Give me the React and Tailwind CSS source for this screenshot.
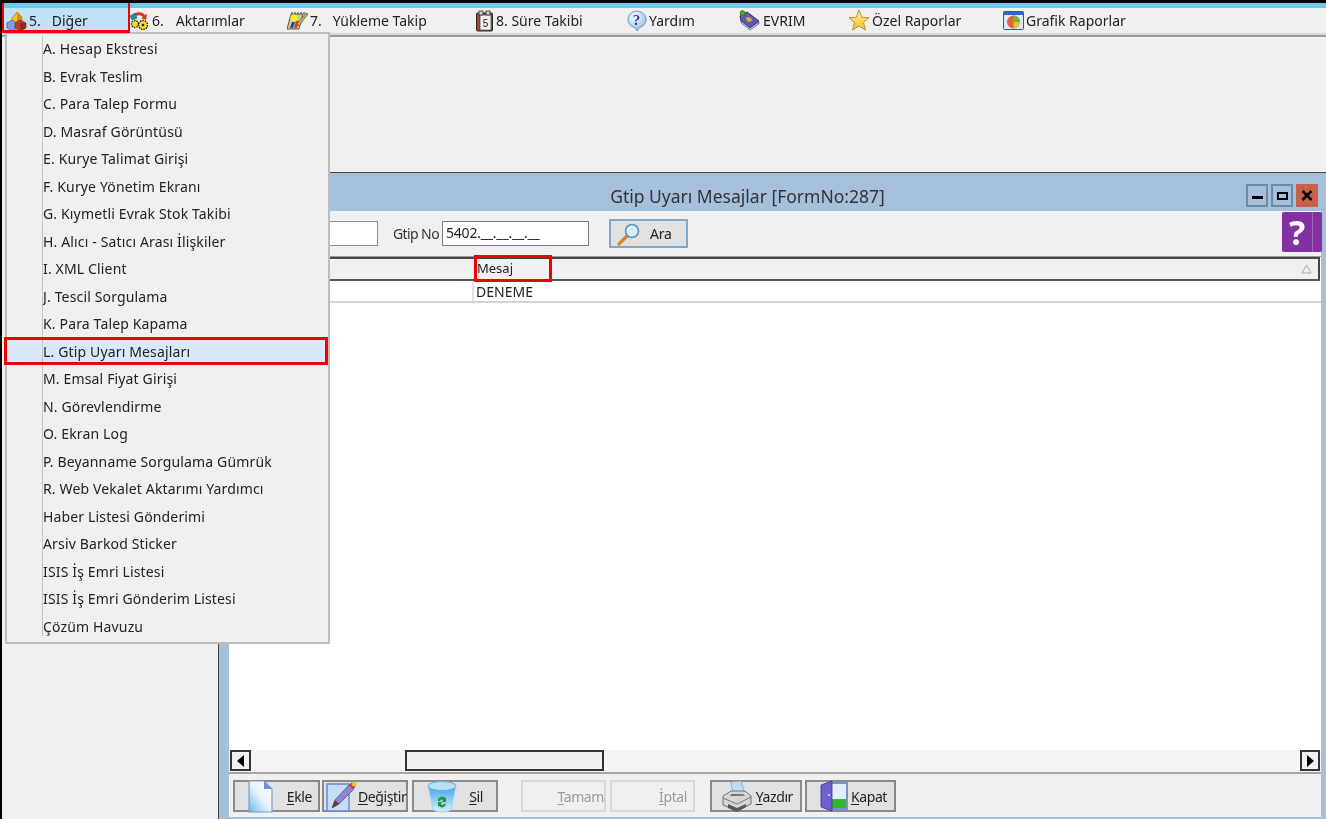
import React from "react";

const F = "font-['Noto_Sans','Open_Sans',sans-serif]";

const Cubes = () => (
  <svg width="21" height="21" viewBox="0 0 21 21">
    <path d="M6 8l5-6 5 5v5l-5 3-5-3z" fill="#f5c21a" stroke="#8a6a08" strokeWidth=".6" />
    <path d="M11 2l5 5v5l-5 3z" fill="#e08d14" />
    <path d="M1 13l5-3 5 3v5l-5 3-5-3z" fill="#8d95e6" stroke="#3c4390" strokeWidth=".6" />
    <path d="M9 13l5-3 6 3v5l-6 3-5-3z" fill="#c83a2e" stroke="#6d1a10" strokeWidth=".6" />
    <path d="M14 13v8l6-3v-5z" fill="#8f2a20" />
  </svg>
);
const Gears = () => (
  <svg width="21" height="21" viewBox="0 0 21 21">
    <path d="M5 4c4-3 9-2 11 1l2-1-1 6-5-2 2-1c-2-2-5-2-7-1z" fill="#d8342a" />
    <path d="M1 6l5-3 2 5-5 2z" fill="#1f8f99" stroke="#104a55" strokeWidth=".5" />
    <circle cx="6" cy="14" r="3.500" fill="#f5dc1e" stroke="#222" strokeWidth="1.300" strokeDasharray="1.500 1" />
    <circle cx="14" cy="15" r="4.500" fill="#f5dc1e" stroke="#222" strokeWidth="1.500" strokeDasharray="1.500 1" />
    <circle cx="14" cy="15" r="1.300" fill="#222" />
  </svg>
);
const ChartPen = () => (
  <svg width="21" height="20" viewBox="0 0 21 20">
    <path d="M4 3h12l-4 15H0z" fill="#cfc79a" stroke="#3d3a20" strokeWidth=".8" />
    <circle cx="7" cy="7" r="3.500" fill="#f8ee1e" />
    <path d="M3 17l2-6h3l-2 6z" fill="#2a3fc0" />
    <path d="M7 17l2-7h3l-2 7z" fill="#d63a2a" />
    <path d="M10 13l9-11 2 1-9 12z" fill="#c9b060" stroke="#444020" strokeWidth=".6" />
    <path d="M4 2h14" stroke="#333" strokeWidth="1.100" strokeDasharray="2 1" />
  </svg>
);
const Clip = () => (
  <svg width="19" height="22" viewBox="0 0 19 22">
    <rect x="1.500" y="3" width="16" height="18" rx="1" fill="#a4463a" stroke="#33261c" />
    <rect x="5" y="5" width="11" height="15" fill="#f1f1f1" stroke="#444" strokeWidth=".7" />
    <rect x="4" y="1" width="4" height="4" fill="#ccc" stroke="#333" strokeWidth=".8" />
    <rect x="11" y="1" width="4" height="4" fill="#ccc" stroke="#333" strokeWidth=".8" />
    <text x="10.500" y="16.500" textAnchor="middle" fontSize="10" fontFamily="Liberation Sans" fill="#222">5</text>
  </svg>
);
const Help = () => (
  <svg width="21" height="22" viewBox="0 0 21 22">
    <defs>
      <radialGradient id="hg" cx=".4" cy=".3" r=".8">
        <stop offset="0" stopColor="#ffffff" />
        <stop offset="1" stopColor="#7fb4e4" />
      </radialGradient>
    </defs>
    <path d="M10.500 1a9.500 8.500 0 0 1 3 16.600L11 21l-2-3.300A9.500 8.500 0 0 1 10.500 1z" fill="url(#hg)" stroke="#6d9cc9" />
    <text x="10.500" y="15" textAnchor="middle" fontSize="15" fontWeight="700" fontFamily="Liberation Serif" fill="#1f3f9c">?</text>
  </svg>
);
const Book = () => (
  <svg width="23" height="21" viewBox="0 0 23 21">
    <path d="M2 6l7-4 12 9-9 7-9-7z" fill="#5a5fae" stroke="#23265c" strokeWidth=".9" />
    <path d="M3 11l9 7 9-6v2l-9 6-9-7z" fill="#c9c9de" stroke="#23265c" strokeWidth=".5" />
    <path d="M9 7l4 1 1 3-4 1-2-3z" fill="#e8ad2a" />
    <circle cx="4.500" cy="3" r="2.500" fill="#58a828" stroke="#2e5a10" strokeWidth=".6" />
  </svg>
);
const Star = () => (
  <svg width="22" height="23" viewBox="0 0 22 23">
    <defs>
      <linearGradient id="sg" x1="0" y1="0" x2="0" y2="1">
        <stop offset="0" stopColor="#fff2a0" />
        <stop offset="1" stopColor="#f6bf24" />
      </linearGradient>
    </defs>
    <path d="M11 1l2.800 7.300 7.200.4-5.500 4.700 2 7.600-6.500-4-6.500 4 2-7.600L1 8.700l7.200-.4z" fill="url(#sg)" stroke="#b58a14" strokeWidth=".9" />
  </svg>
);
const Pie = () => (
  <svg width="21" height="19" viewBox="0 0 21 19">
    <rect x=".5" y=".5" width="20" height="18" rx="1" fill="#dfe9f5" stroke="#2a5aa5" />
    <rect x=".5" y=".5" width="20" height="3.500" fill="#2a6ac0" />
    <circle cx="10.500" cy="11" r="6.500" fill="#e9622a" />
    <path d="M10.500 11V4.500a6.500 6.500 0 0 1 6.500 6.500z" fill="#6cb83a" />
    <path d="M10.500 11H17a6.500 6.500 0 0 1-6.500 6.500z" fill="#e8c22a" />
  </svg>
);
const Lens = () => (
  <svg width="24" height="24" viewBox="0 0 24 24">
    <path d="M10 14L2 22" stroke="#d9862a" strokeWidth="3.200" strokeLinecap="round" />
    <circle cx="15" cy="9" r="6.500" fill="#d5ecf9" stroke="#5d91bd" strokeWidth="1.600" />
    <path d="M11 8a4 4 0 0 1 4-3" stroke="#fff" strokeWidth="1.400" fill="none" />
  </svg>
);
const Doc = () => (
  <svg width="25" height="33" viewBox="0 0 25 33">
    <defs>
      <linearGradient id="dg" x1="1" y1="0" x2="0" y2="1">
        <stop offset="0" stopColor="#ffffff" />
        <stop offset=".5" stopColor="#e8f3fb" />
        <stop offset="1" stopColor="#6fb8ea" />
      </linearGradient>
    </defs>
    <path d="M1 1h15l8 8v23H1z" fill="url(#dg)" stroke="#7f9ccd" strokeWidth="1.200" />
    <path d="M16 1v8h8z" fill="#6f90d6" />
  </svg>
);
const PenIcon = () => (
  <svg width="32" height="31" viewBox="0 0 32 31">
    <rect x="1" y="3" width="22" height="27" fill="#c4dcf4" stroke="#6b7fd0" strokeWidth="1.400" />
    <path d="M6 27l3-8L23 4l5 4-15 15z" fill="#8f86cf" stroke="#4b4590" strokeWidth=".7" />
    <path d="M6 27l3-8 4 4z" fill="#5a4320" />
    <path d="M23 4l3-3 4 3-2 4z" fill="#d92a20" />
    <circle cx="28" cy="3" r="2.500" fill="#ecc42c" />
  </svg>
);
const Bin = () => (
  <svg width="30" height="33" viewBox="0 0 30 33">
    <defs>
      <linearGradient id="bg1" x1="0" y1="0" x2="0" y2="1">
        <stop offset="0" stopColor="#3fa5ea" />
        <stop offset="1" stopColor="#d8f0fc" />
      </linearGradient>
    </defs>
    <path d="M1 6l5 24q9 4 18 0l5-24z" fill="url(#bg1)" stroke="#a5d3f0" />
    <ellipse cx="15" cy="6" rx="14" ry="4.500" fill="#b8e0f7" stroke="#62aee5" />
    <path d="M11 21a4 4 0 0 1 7-3l1-1v5h-4l1-2a2 2 0 0 0-3 1zM19 24a4 4 0 0 1-7 2l-1 1v-5h4l-1 2a2 2 0 0 0 3 0z" fill="#1f9a3e" />
  </svg>
);
const Printer = () => (
  <svg width="31" height="31" viewBox="0 0 31 31">
    <path d="M10 1l10-1 4 13H12z" fill="#bcdcf7" stroke="#7ba6d4" strokeWidth=".8" />
    <path d="M2 15l8-5h14l6 5v8L16 30 2 24z" fill="#d6d6d6" stroke="#666" strokeWidth=".9" />
    <path d="M2 17l14 6 14-7" stroke="#777" fill="none" />
    <path d="M7 23l9 4 9-4v3l-9 5-9-4z" fill="#55575a" />
    <path d="M10 13h12l2 2H9z" fill="#777" />
  </svg>
);
const Door = () => (
  <svg width="28" height="32" viewBox="0 0 28 32">
    <rect x="11" y="3" width="16" height="26" fill="#dff0fa" stroke="#3d55b0" strokeWidth="1.200" />
    <rect x="12" y="19" width="14" height="9" fill="#33b52e" />
    <path d="M1 5l11-4v30L1 27z" fill="#6d62cf" stroke="#3a2f96" strokeWidth=".8" />
    <circle cx="9" cy="15" r="1" fill="#eee" />
  </svg>
);

const tops = [
  { w: "w-[125px]", icon: <Cubes />, a: "5.", b: "Diğer", gap: "ml-[9px]", sel: true, pl: "pl-[3px]" },
  { w: "w-[157px]", icon: <Gears />, a: "6.", b: "Aktarımlar", gap: "ml-[10px]", pl: "pl-[1px]" },
  { w: "w-[188px]", icon: <ChartPen />, a: "7.", b: "Yükleme Takip", gap: "ml-[9px]", pl: "pl-[2px]" },
  { w: "w-[152px]", icon: <Clip />, a: "8. Süre Takibi", pl: "pl-[2px]" },
  { w: "w-[113px]", icon: <Help />, a: "Yardım", pl: "pl-[1px]" },
  { w: "w-[109px]", icon: <Book />, a: "EVRIM", pl: "pl-0" },
  { w: "w-[154px]", icon: <Star />, a: "Özel Raporlar", pl: "pl-[1px]" },
  { w: "w-[150px]", icon: <Pie />, a: "Grafik Raporlar", pl: "pl-[2px]" },
];

const items = [
  "A. Hesap Ekstresi", "B. Evrak Teslim", "C. Para Talep Formu", "D. Masraf Görüntüsü",
  "E. Kurye Talimat Girişi", "F. Kurye Yönetim Ekranı", "G. Kıymetli Evrak Stok Takibi",
  "H. Alıcı - Satıcı Arası İlişkiler", "I. XML Client", "J. Tescil Sorgulama", "K. Para Talep Kapama",
  "L. Gtip Uyarı Mesajları", "M. Emsal Fiyat Girişi", "N. Görevlendirme", "O. Ekran Log",
  "P. Beyanname Sorgulama Gümrük", "R. Web Vekalet Aktarımı Yardımcı", "Haber Listesi Gönderimi",
  "Arsiv Barkod Sticker", "ISIS İş Emri Listesi", "ISIS İş Emri Gönderim Listesi", "Çözüm Havuzu",
];

const Btn = ({ icon, u, rest, w, ml = "", disabled, pl = "pl-[13px]", pr = "pr-[7px]" }) => (
  <div
    className={`${w} ${ml} ${pl} ${pr} h-[32px] flex items-center justify-between border-2 text-[14px] tracking-[-0.4px] ${
      disabled ? "border-[#d8d8d8] bg-[#f0f0f0] text-[#9a9a9a]" : "border-[#8a8a8a] bg-[#e1e1e1] text-[#222]"
    }`}
  >
    <span className="flex items-center">{icon}</span>
    <span>
      <span className="underline underline-offset-2">{u}</span>
      {rest}
    </span>
  </div>
);

export default function App() {
  return (
    <div className={`${F} relative w-[1326px] h-[819px] overflow-hidden bg-[#f0f0f0] text-[#222] border-l-2 border-black flex flex-col blur-[0.35px]`}>
      <div className="h-[3px] bg-black shrink-0 -ml-[2px]" />
      <div className="h-[5px] bg-[#6accec] shrink-0" />
      <div className="h-[25px] shrink-0 flex items-center text-[14px]">
        <div className="w-[1px] shrink-0" />
        {tops.map((t, i) => (
          <div key={i} className={`${t.w} ${t.pl} h-full shrink-0 flex items-center gap-[2px] whitespace-nowrap ${t.sel ? "bg-[#bfe2f6]" : ""}`}>
            {t.icon}
            <span>{t.a}</span>
            {t.b && <span className={t.gap}>{t.b}</span>}
          </div>
        ))}
      </div>
      <div className="h-[4px] shrink-0 bg-[#9a9a9a] border-t-2 border-[#d8d8d8]" />

      <div className="flex-1 flex pt-[135px] min-h-0">
        <div className="w-[216px] shrink-0" />
        <div className="flex-1 flex flex-col bg-[#a6c0dc] border-t border-l border-[#444] min-h-0">
          <div className="h-[38px] shrink-0 flex items-start">
            <div className="flex-1 text-center pl-[30px] pt-[11px] text-[17.5px] leading-[24px] text-[#333]">Gtip Uyarı Mesajlar [FormNo:287]</div>
            <div className="flex gap-[3px] pt-[11px] pr-[8px]">
              <div className="w-[22px] h-[23px] bg-[#a6c0dc] border-2 border-[#7289a6] flex items-center justify-center">
                <div className="w-[11px] h-[3px] bg-black mt-[3px]" />
              </div>
              <div className="w-[22px] h-[23px] bg-[#a6c0dc] border-2 border-[#7289a6] flex items-center justify-center">
                <div className="w-[11px] h-[8px] border-2 border-black" />
              </div>
              <div className="w-[22px] h-[23px] bg-[#c9604a] flex items-center justify-center">
                <svg width="12" height="11" viewBox="0 0 12 11"><path d="M1.500 1l9 9M10.500 1l-9 9" stroke="#000" strokeWidth="2.600" /></svg>
              </div>
            </div>
          </div>

          <div className="flex-1 ml-[10px] mr-[5px] mb-[2px] bg-[#f0f0f0] flex flex-col min-h-0">
            <div className="h-[45px] shrink-0 flex items-center text-[14px] tracking-[-0.2px]">
              <div className="ml-[49px] w-[100px] h-[25px] bg-white border border-[#8d8d8d]" />
              <span className="ml-[15px] w-[49px] whitespace-nowrap text-[#333] tracking-[-0.6px]">Gtip No</span>
              <div className="ml-[0px] w-[147px] h-[25px] bg-white border border-[#7d7d7d] pl-[3px] leading-[21px] whitespace-nowrap">5402.__.__.__.__</div>
              <div className="ml-[20px] w-[79px] h-[29px] bg-[#e1e1e1] border-2 border-[#7fa8cc] flex items-center pl-[6px]">
                <Lens />
                <span className="ml-[9px]">Ara</span>
              </div>
              <div className="ml-auto -mr-[1px] -mt-[4px] w-[40px] h-[40px] bg-[#8330a3] rounded-[2px] flex items-center">
                <span className="w-[30px] text-center text-white font-bold text-[34px] leading-[40px]">?</span>
                <div className="w-[1px] h-full bg-[#a062ba]" />
              </div>
            </div>

            <div className="flex-1 bg-white border-t border-[#9a9a9a] flex flex-col min-h-0">
              <div className="h-[24px] shrink-0 mr-[1px] flex bg-[#f0f0f0] border-t-2 border-b-2 border-r-2 border-t-[#444] border-b-[#555] border-r-[#444] text-[13px]">
                <div className="w-[245px] shrink-0" />
                <div className="flex-1 flex items-center justify-between pl-[3px] pr-[6px]">
                  <span>Mesaj</span>
                  <svg width="11" height="10" viewBox="0 0 11 10"><path d="M5.500 1L10 9H1z" fill="none" stroke="#aaa" /></svg>
                </div>
              </div>
              <div className="h-[22px] shrink-0 flex border-b-2 border-[#d4d4d4] text-[14px]">
                <div className="w-[245px] shrink-0 border-r-2 border-[#e2e2e2]" />
                <div className="flex-1 pl-[2px] leading-[21px]">DENEME</div>
              </div>
              <div className="flex-1" />
              <div className="h-[22px] shrink-0 bg-[#f5f5f5] flex">
                <div className="w-[21px] h-[21px] ml-[1px] bg-[#f0f0f0] border-2 border-[#333] flex items-center justify-center">
                  <svg width="8" height="12" viewBox="0 0 8 12"><path d="M7 0v12L0 6z" fill="#000" /></svg>
                </div>
                <div className="ml-[154px] w-[199px] h-[21px] bg-[#f0f0f0] border-2 border-[#333]" />
                <div className="ml-auto mr-[1px] w-[20px] h-[21px] bg-[#f0f0f0] border-2 border-[#333] flex items-center justify-center">
                  <svg width="8" height="12" viewBox="0 0 8 12"><path d="M1 0v12l7-6z" fill="#000" /></svg>
                </div>
              </div>
            </div>

            <div className="h-[45px] shrink-0 border-t-2 border-[#a5a5a5] flex items-start pt-[6px] pl-[4px]">
              <Btn w="w-[87px]" pr="pr-[6px]" icon={<Doc />} u="E" rest="kle" />
              <Btn w="w-[86px]" ml="ml-[2px]" pl="pl-[2px]" pr="pr-[1px]" icon={<PenIcon />} u="D" rest="eğiştir" />
              <Btn w="w-[86px]" ml="ml-[4px]" pl="pl-[13px]" pr="pr-[13px]" icon={<Bin />} u="S" rest="il" />
              <Btn w="w-[85px]" ml="ml-[23px]" pr="pr-[0px]" disabled icon={null} u="T" rest="amam" />
              <Btn w="w-[85px]" ml="ml-[4px]" pr="pr-[6px]" disabled icon={null} u="İ" rest="ptal" />
              <Btn w="w-[92px]" ml="ml-[15px]" pl="pl-[9px]" icon={<Printer />} u="Y" rest="azdır" />
              <Btn w="w-[91px]" ml="ml-[3px]" pl="pl-[13px]" icon={<Door />} u="K" rest="apat" />
            </div>
          </div>
        </div>
      </div>

      {/* open dropdown menu */}
      <div className="absolute left-[3px] top-[32px] w-[325px] h-[612px] bg-[#f0f0f0] border-2 border-[#bdbdbd] pt-[1px] text-[14px] tracking-[0.15px]">
        <div className="absolute left-[35px] top-[2px] bottom-[6px] w-[1px] bg-[#c4c4c4]" />
        {items.map((it) => (
          <div
            key={it}
            className={`h-[27.5px] flex items-center pl-[36px] whitespace-nowrap text-[#222] ${
              it.startsWith("L.") ? "bg-[#d9e9fb]" : ""
            }`}
          >
            {it}
          </div>
        ))}
      </div>

      {/* red annotation boxes */}
      <div className="absolute left-0 top-[3px] w-[128px] h-[30px] border-l-2 border-r-2 border-b-[3px] border-[#f00000]" />
      <div className="absolute left-[2px] top-[337px] w-[324px] h-[28px] border-[3px] border-[#f00000]" />
      <div className="absolute left-[472px] top-[255px] w-[78px] h-[27px] border-[3px] border-[#f00000]" />
    </div>
  );
}
